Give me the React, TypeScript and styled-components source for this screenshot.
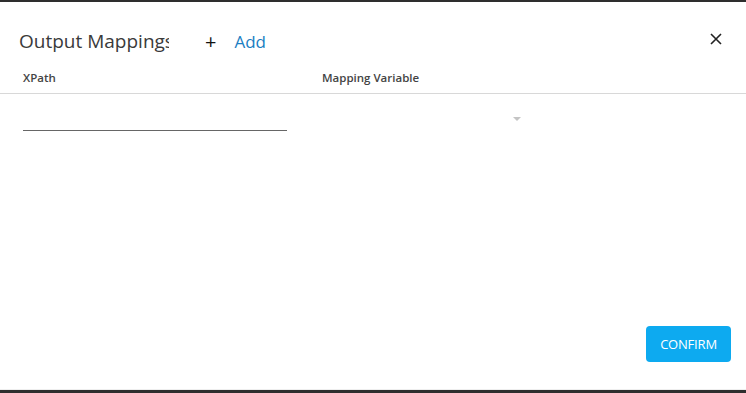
import styled, { createGlobalStyle } from "styled-components";

const Global = createGlobalStyle`
  html, body { margin: 0; padding: 0; background: #2e2e2e; }
  body { font-family: "Open Sans", Lato, sans-serif; }
`;

const Frame = styled.div`
  width: 746px;
  height: 393px;
  box-sizing: border-box;
  border-top: 2px solid #2e2e2e;
  border-bottom: 3px solid #2e2e2e;
  background: #fff;
  display: flex;
  flex-direction: column;
`;

const Header = styled.div`
  display: flex;
  align-items: center;
  height: 78px;
  padding: 0 24px 0 19px;
  box-sizing: border-box;
`;

const Title = styled.div`
  width: 150px;
  overflow: hidden;
  white-space: nowrap;
  font-size: 19px;
  color: #3a3a3a;
`;

const AddButton = styled.button`
  border: none;
  background: none;
  padding: 0;
  margin-left: 36px;
  display: flex;
  align-items: center;
  gap: 18px;
  font-family: inherit;
  font-size: 17px;
  color: #1b7ec2;
  cursor: pointer;
`;

const Plus = styled.span`
  color: #111;
  font-size: 20px;
`;

const Close = styled.button`
  margin-left: auto;
  border: none;
  background: none;
  padding: 0;
  display: flex;
  margin-top: -4px;
`;

const ColumnRow = styled.div`
  display: grid;
  grid-template-columns: 299px 1fr;
  padding: 0 0 8px 23px;
  margin-top: -10px;
  border-bottom: 1px solid #d8d8d8;
  font-size: 11.5px;
  font-weight: 600;
  color: #444;
`;

const DataRow = styled.div`
  display: grid;
  grid-template-columns: 299px 199px;
  padding-left: 23px;
  padding-top: 18px;
`;

const TextInput = styled.div`
  width: 264px;
  height: 18px;
  border-bottom: 1px solid #666;
`;

const Select = styled.div`
  display: flex;
  justify-content: flex-end;
  padding-top: 5px;
`;

const Body = styled.div`
  flex: 1;
`;

const Footer = styled.div`
  display: flex;
  justify-content: flex-end;
  padding: 0 15px 27px 0;
  border-bottom: 1px solid #eee;
`;

const Confirm = styled.button`
  width: 85px;
  height: 36px;
  border: none;
  border-radius: 4px;
  background: #0daaf0;
  color: #fff;
  font-family: inherit;
  font-size: 13px;
  letter-spacing: -0.2px;
`;

export default function App() {
  return (
    <>
      <Global />
      <Frame>
        <Header>
          <Title>Output Mappings</Title>
          <AddButton>
            <Plus>+</Plus>
            Add
          </AddButton>
          <Close>
            <svg width="12" height="12" viewBox="0 0 12 12">
              <path d="M1 1L11 11M11 1L1 11" stroke="#222" strokeWidth="1.6" />
            </svg>
          </Close>
        </Header>
        <ColumnRow>
          <span>XPath</span>
          <span>Mapping Variable</span>
        </ColumnRow>
        <Body>
          <DataRow>
            <TextInput />
            <Select>
              <svg width="8" height="5" viewBox="0 0 8 5">
                <path d="M0 0H8L4 4Z" fill="#c4c4c4" />
              </svg>
            </Select>
          </DataRow>
        </Body>
        <Footer>
          <Confirm>CONFIRM</Confirm>
        </Footer>
      </Frame>
    </>
  );
}
